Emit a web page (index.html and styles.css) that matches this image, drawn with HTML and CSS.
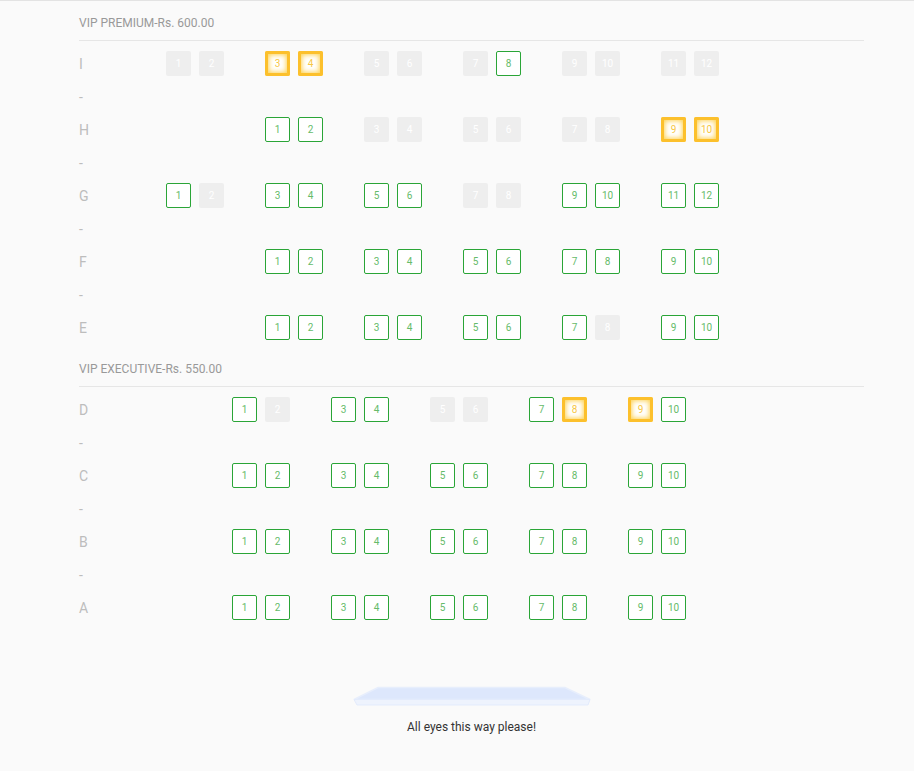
FILE: index.html
```html
<!DOCTYPE html>
<html lang="en">
<head>
    <meta charset="UTF-8">
    <meta name="viewport" content="width=device-width, initial-scale=1.0">
    <title>Seat Layout</title>
    <link rel="stylesheet" href="styles.css">
</head>
<body>

    <div class="layout">
        <!-- Seat sections are filled in by the script below -->
        <div id="sections"></div>

        <!-- Screen -->
        <div class="screen">
            <svg width="240" height="21" viewBox="0 0 240 21">
                <polygon points="26,1.5 213,1.5 238,13.5 2,13.5" fill="#dde7fc" stroke="#e7eefc" stroke-width="1.5"/>
                <polygon points="2,13.5 238,13.5 236,19 5,19" fill="#eef3fd" stroke="#e3ebfc" stroke-width="1"/>
            </svg>
            <p class="screen-text">All eyes this way please!</p>
        </div>
    </div>

    <script>
        // a = available, x = sold, s = selected, . = gap
        const sections = [
            {
                title: 'VIP PREMIUM-Rs. 600.00',
                rows: [
                    ['I', 'xx.ss.xx.xa.xx.xx'],
                    ['H', '...aa.xx.xx.xx.ss'],
                    ['G', 'ax.aa.aa.xx.aa.aa'],
                    ['F', '...aa.aa.aa.aa.aa'],
                    ['E', '...aa.aa.aa.ax.aa']
                ]
            },
            {
                title: 'VIP EXECUTIVE-Rs. 550.00',
                rows: [
                    ['D', '..ax.aa.xx.as.sa'],
                    ['C', '..aa.aa.aa.aa.aa'],
                    ['B', '..aa.aa.aa.aa.aa'],
                    ['A', '..aa.aa.aa.aa.aa']
                ]
            }
        ];

        const classes = { a: 'seat available', x: 'seat sold', s: 'seat selected' };

        function buildRow(label, layout) {
            let html = `<div class="row"><span class="row-label">${label}</span>`;
            let num = 0;
            for (const c of layout) {
                if (c === '.') {
                    html += '<span class="slot"></span>';
                } else {
                    num++;
                    html += `<span class="slot"><span class="${classes[c]}">${num}</span></span>`;
                }
            }
            return html + '</div>';
        }

        const container = document.getElementById('sections');
        sections.forEach(section => {
            let html = `<section class="block"><h2 class="block-title">${section.title}</h2>`;
            section.rows.forEach((row, i) => {
                if (i > 0) html += '<div class="row"><span class="row-label">-</span></div>';
                html += buildRow(row[0], row[1]);
            });
            container.innerHTML += html + '</section>';
        });
    </script>

</body>
</html>
```

FILE: styles.css
```css
/* General Styles */
body {
    font-family: 'Roboto', 'Liberation Sans', sans-serif;
    margin: 0;
    padding: 0;
    background-color: #fafafa;
    color: #333;
    border-top: 1px solid #e3e3e3;
}
.layout {
    width: 785px;
    margin-left: 79px;
}

/* Section headings */
.block + .block {
    margin-top: 3px;
}
.block-title {
    font-size: 12px;
    font-weight: normal;
    line-height: 14px;
    color: #999;
    margin: 0 0 6px;
    padding: 15px 0 10px;
    border-bottom: 1px solid #e6e6e6;
}

/* Rows and seats */
.row {
    display: flex;
    align-items: center;
    height: 33px;
}
.row-label {
    width: 87px;
    font-size: 14px;
    color: #bdbdbd;
}
.slot {
    width: 33px;
    height: 33px;
    display: flex;
    align-items: center;
}
.seat {
    box-sizing: border-box;
    width: 25px;
    height: 25px;
    border-radius: 2px;
    font-size: 10px;
    display: flex;
    align-items: center;
    justify-content: center;
}
.available {
    border: 1px solid #2aa537;
    background-color: #fff;
    color: #66bb6a;
}
.sold {
    background-color: #eeeeee;
    color: #fff;
}
.selected {
    background-color: #fff;
    color: #f7c744;
    box-shadow: inset 0 0 0 3px #fcc02c, inset 0 0 5px 4px #fdd255;
}

/* Screen */
.screen {
    margin-top: 62px;
    display: flex;
    flex-direction: column;
    align-items: center;
}
.screen svg {
    display: block;
}
.screen-text {
    margin: 12px 0 0;
    font-size: 12px;
    line-height: 16px;
    color: #333;
}
```
